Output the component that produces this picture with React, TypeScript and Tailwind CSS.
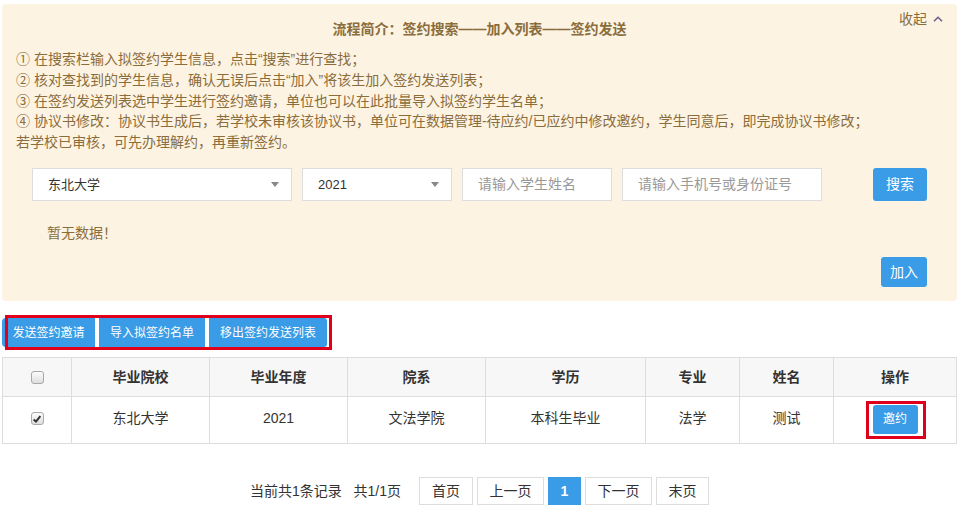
import React from "react";

const font = "font-['Liberation_Sans','Noto_Sans_CJK_SC',sans-serif]";

const steps = [
  "① 在搜索栏输入拟签约学生信息，点击“搜索”进行查找；",
  "② 核对查找到的学生信息，确认无误后点击“加入”将该生加入签约发送列表；",
  "③ 在签约发送列表选中学生进行签约邀请，单位也可以在此批量导入拟签约学生名单；",
  "④ 协议书修改：协议书生成后，若学校未审核该协议书，单位可在数据管理-待应约/已应约中修改邀约，学生同意后，即完成协议书修改；",
  "若学校已审核，可先办理解约，再重新签约。",
];

const columns = [
  { title: "毕业院校", w: "w-[138px]" },
  { title: "毕业年度", w: "w-[138px]" },
  { title: "院系", w: "w-[138px]" },
  { title: "学历", w: "w-[160px]" },
  { title: "专业", w: "w-[94px]" },
  { title: "姓名", w: "w-[94px]" },
];

const row = ["东北大学", "2021", "文法学院", "本科生毕业", "法学", "测试"];

function Caret() {
  return <span className="ml-auto h-0 w-0 border-x-[4px] border-t-[5px] border-x-transparent border-t-[#888]" />;
}

function Checkbox({ checked }: { checked?: boolean }) {
  return (
    <span className="grid size-[13px] place-items-center rounded-[3px] border border-[#a9a9a9] bg-gradient-to-b from-[#fcfcfc] to-[#dedede]">
      {checked && (
        <svg viewBox="0 0 12 12" className="size-[10px]">
          <path d="M2 6.5 L4.8 9 L10 2.5" fill="none" stroke="#333" strokeWidth="2.4" />
        </svg>
      )}
    </span>
  );
}

export default function App() {
  return (
    <div className={`${font} h-[522px] w-[962px] overflow-hidden bg-white pl-[2px] pr-[5px] pt-[4px] text-[14px]`}>
      {/* 流程 panel */}
      <div className="relative flex h-[297px] flex-col rounded-[4px] bg-[#fdf3e3] text-[#8a6d3b]">
        <button className="absolute right-[14px] top-[5px] flex items-center gap-[6px] text-[14px] leading-5 text-[#8a6d3b]">
          收起
          <svg viewBox="0 0 10 6" className="h-[6px] w-[10px]">
            <path d="M1 5.2 L5 1.2 L9 5.2" fill="none" stroke="#6f5a8a" strokeWidth="1.5" />
          </svg>
        </button>
        <div className="mt-[15px] text-center font-bold leading-5">流程简介：签约搜索——加入列表——签约发送</div>
        <div className="mt-[10px] pl-[14px] leading-[20.8px]">
          {steps.map((s) => (
            <div key={s}>{s}</div>
          ))}
        </div>

        <div className="ml-[30px] mr-[30px] mt-[15px] flex items-center gap-[10px] text-[#555]">
          <div className="flex h-[33px] w-[260px] items-center border border-[#ddd] bg-white pl-[15px] pr-[12px] text-[13px] text-[#333]">
            东北大学
            <Caret />
          </div>
          <div className="flex h-[33px] w-[150px] items-center border border-[#ddd] bg-white pl-[15px] pr-[12px] text-[13px] text-[#333]">
            2021
            <Caret />
          </div>
          <input
            placeholder="请输入学生姓名"
            className="h-[33px] w-[150px] border border-[#ddd] bg-white px-[15px] outline-none placeholder:text-[#999]"
          />
          <input
            placeholder="请输入手机号或身份证号"
            className="h-[33px] w-[200px] border border-[#ddd] bg-white px-[15px] outline-none placeholder:text-[#999]"
          />
          <button className="ml-auto h-[33px] w-[54px] rounded-[3px] bg-[#3a9be6] text-white">搜索</button>
        </div>

        <div className="ml-[45px] mt-[22px] leading-5">暂无数据！</div>

        <div className="mr-[30px] mt-auto mb-[14px] flex justify-end">
          <button className="h-[30px] w-[46px] rounded-[3px] bg-[#3a9be6] text-white">加入</button>
        </div>
      </div>

      {/* action buttons */}
      <div className="relative mt-[17px] flex h-[29px] gap-[4px] text-[12px]">
        <button className="h-full w-[93px] rounded-l-[4px] bg-[#3a9be6] text-white">发送签约邀请</button>
        <button className="h-full w-[106px] bg-[#3a9be6] text-white">导入拟签约名单</button>
        <button className="h-full w-[118px] rounded-r-[3px] bg-[#3a9be6] text-white">移出签约发送列表</button>
        <div className="pointer-events-none absolute left-[3px] top-[-3px] h-[35px] w-[327px] border-[3px] border-[#e0001b]" />
      </div>

      {/* table */}
      <table className="mt-[10px] w-[955px] border-collapse text-center text-[14px] text-[#333]">
        <thead>
          <tr className="h-[39px] bg-[#f7f7f7]">
            <th className="w-[69px] border border-[#ddd]">
              <div className="flex justify-center">
                <Checkbox />
              </div>
            </th>
            {columns.map((c) => (
              <th key={c.title} className={`${c.w} border border-[#ddd] font-bold`}>
                {c.title}
              </th>
            ))}
            <th className="border border-[#ddd] font-bold">操作</th>
          </tr>
        </thead>
        <tbody>
          <tr className="h-[47px]">
            <td className="border border-[#ddd] pb-[3px]">
              <div className="flex justify-center">
                <Checkbox checked />
              </div>
            </td>
            {row.map((v, i) => (
              <td key={i} className="border border-[#ddd] pb-[3px]">
                {v}
              </td>
            ))}
            <td className="border border-[#ddd] pb-[2px]">
              <div className="flex justify-center">
                <div className="relative">
                  <button className="h-[29px] w-[45px] rounded-[3px] bg-[#3a9be6] text-[12px] text-white">邀约</button>
                  <div className="pointer-events-none absolute left-[-7px] top-[-4px] h-[38px] w-[60px] border-[3px] border-[#e0001b]" />
                </div>
              </div>
            </td>
          </tr>
        </tbody>
      </table>

      {/* pagination */}
      <div className="mt-[33px] flex h-[28px] items-center justify-center gap-[4px] text-[14px] text-[#333]">
        <span className="mr-[14px]">当前共1条记录&nbsp;&nbsp;&nbsp;共1/1页</span>
        <span className="flex h-full w-[54px] items-center justify-center border border-[#ddd]">首页</span>
        <span className="flex h-full w-[67px] items-center justify-center border border-[#ddd]">上一页</span>
        <span className="flex h-full w-[33px] items-center justify-center bg-[#3a9be6] font-bold text-white">1</span>
        <span className="flex h-full w-[67px] items-center justify-center border border-[#ddd]">下一页</span>
        <span className="flex h-full w-[53px] items-center justify-center border border-[#ddd]">末页</span>
      </div>
    </div>
  );
}
